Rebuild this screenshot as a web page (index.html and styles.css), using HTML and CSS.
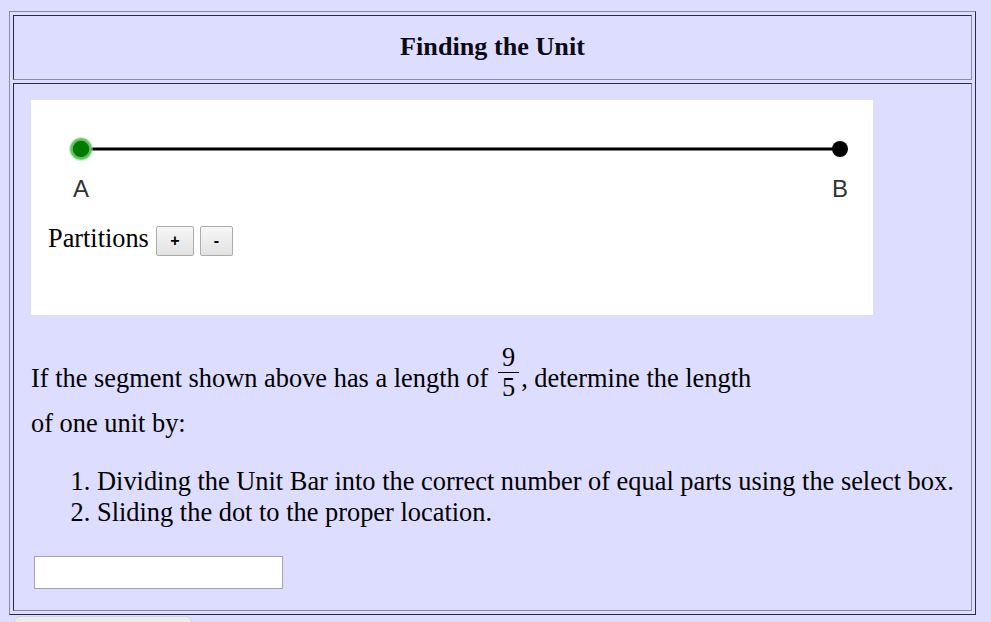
FILE: index.html
```html
<!DOCTYPE html>
<html>
<head>
<meta charset="utf-8">
<title>Finding the Unit</title>
<link rel="stylesheet" href="styles.css">
</head>
<body>
<div class="page">
  <table class="frame">
    <tr>
      <td class="title-cell"><h1 class="title">Finding the Unit</h1></td>
    </tr>
    <tr>
      <td class="main-cell">
        <div class="applet">
          <svg class="segment" width="842" height="110" viewBox="0 0 842 110">
            <line x1="50" y1="49" x2="809" y2="49" stroke="#000" stroke-width="3"/>
            <circle cx="50" cy="49" r="12" fill="#9fd89f" opacity="0.5"/>
            <circle cx="50" cy="49" r="9.5" fill="#007a00" stroke="#5fc45f" stroke-width="2.5"/>
            <circle cx="809" cy="49" r="8" fill="#000"/>
            <text class="pt-label" x="50" y="97" text-anchor="middle">A</text>
            <text class="pt-label" x="809" y="97" text-anchor="middle">B</text>
          </svg>
          <div class="partitions">
            <span class="partitions-label">Partitions</span>
            <button class="btn btn-plus" type="button">+</button>
            <button class="btn btn-minus" type="button">-</button>
          </div>
        </div>
        <p class="prompt">If the segment shown above has a length of <span class="frac"><span class="num">9</span><span class="den">5</span></span>, determine the length of one unit by:</p>
        <ol class="steps">
          <li>Dividing the Unit Bar into the correct number of equal parts using the select box.</li>
          <li>Sliding the dot to the proper location.</li>
        </ol>
        <input class="answer" type="text">
      </td>
    </tr>
  </table>
  <div class="below-tab"></div>
</div>
</body>
</html>
```
FILE: styles.css
```css
html, body {
  margin: 0;
  padding: 0;
  background: #ddddff;
  overflow: hidden;
}
body {
  font-family: "Liberation Serif", "Times New Roman", serif;
  color: #000;
  height: 622px;
}
.page {
  padding: 11px 0 0 9px;
}
.frame {
  width: 967px;
  border-collapse: separate;
  border-spacing: 3px;
  border: 1px solid;
  border-color: #8a8aa2 #2a2a44 #2a2a44 #8a8aa2;
}
.frame td {
  border: 1px solid;
  border-color: #2a2a44 #8a8aa2 #8a8aa2 #2a2a44;
  padding: 0;
  vertical-align: top;
}
.title-cell {
  height: 63px;
  text-align: center;
}
.title {
  margin: 0;
  padding-top: 16px;
  font-size: 26.2px;
  line-height: 30px;
  font-weight: bold;
  color: #0a0a14;
}
.main-cell {
  padding: 16px 2px 21px 17px !important;
}
.applet {
  width: 842px;
  height: 215px;
  background: #fff;
}
.segment {
  display: block;
}
.pt-label {
  font-family: "Liberation Sans", Arial, sans-serif;
  font-size: 24px;
  fill: #333;
}
.partitions {
  display: flex;
  align-items: center;
  padding: 16px 0 0 17px;
}
.partitions-label {
  font-size: 26.3px;
  line-height: 30px;
  margin-right: 7px;
  position: relative;
  top: -2px;
}
.btn {
  height: 30px;
  margin: 0 6px 0 0;
  padding: 0;
  border: 1px solid #acacac;
  border-radius: 2px;
  background: linear-gradient(#f7f7f7, #e2e2e2);
  font-family: "Liberation Sans", Arial, sans-serif;
  font-weight: bold;
  font-size: 16px;
  color: #000;
}
.btn-plus { width: 38px; }
.btn-minus { width: 33px; }
.prompt {
  margin: 29px 0 0 0;
  max-width: 725px;
  font-size: 26.4px;
  line-height: 30px;
}
.frac {
  display: inline-flex;
  flex-direction: column;
  align-items: center;
  vertical-align: 21px;
  font-size: 26.4px;
  padding: 0 2px 0 3px;
}
.num {
  line-height: 26px;
  padding: 0 4px 2px;
  border-bottom: 1px solid #000;
}
.den {
  line-height: 26px;
  padding: 1px 4px 8px;
}
.steps {
  margin: 28px 0 0 0;
  padding-left: 66px;
  font-size: 26.4px;
  line-height: 31px;
}
.steps li {
  white-space: nowrap;
}
.answer {
  display: block;
  margin: 28px 0 0 3px;
  width: 249px;
  height: 33px;
  box-sizing: border-box;
  border: 1px solid #a3a3b3;
  background: #fff;
  padding: 0 4px;
}
.below-tab {
  margin: 1px 0 0 5px;
  width: 176px;
  height: 30px;
  border: 1px solid #d2d2d8;
  border-radius: 6px;
  background: #ececf0;
}
```
